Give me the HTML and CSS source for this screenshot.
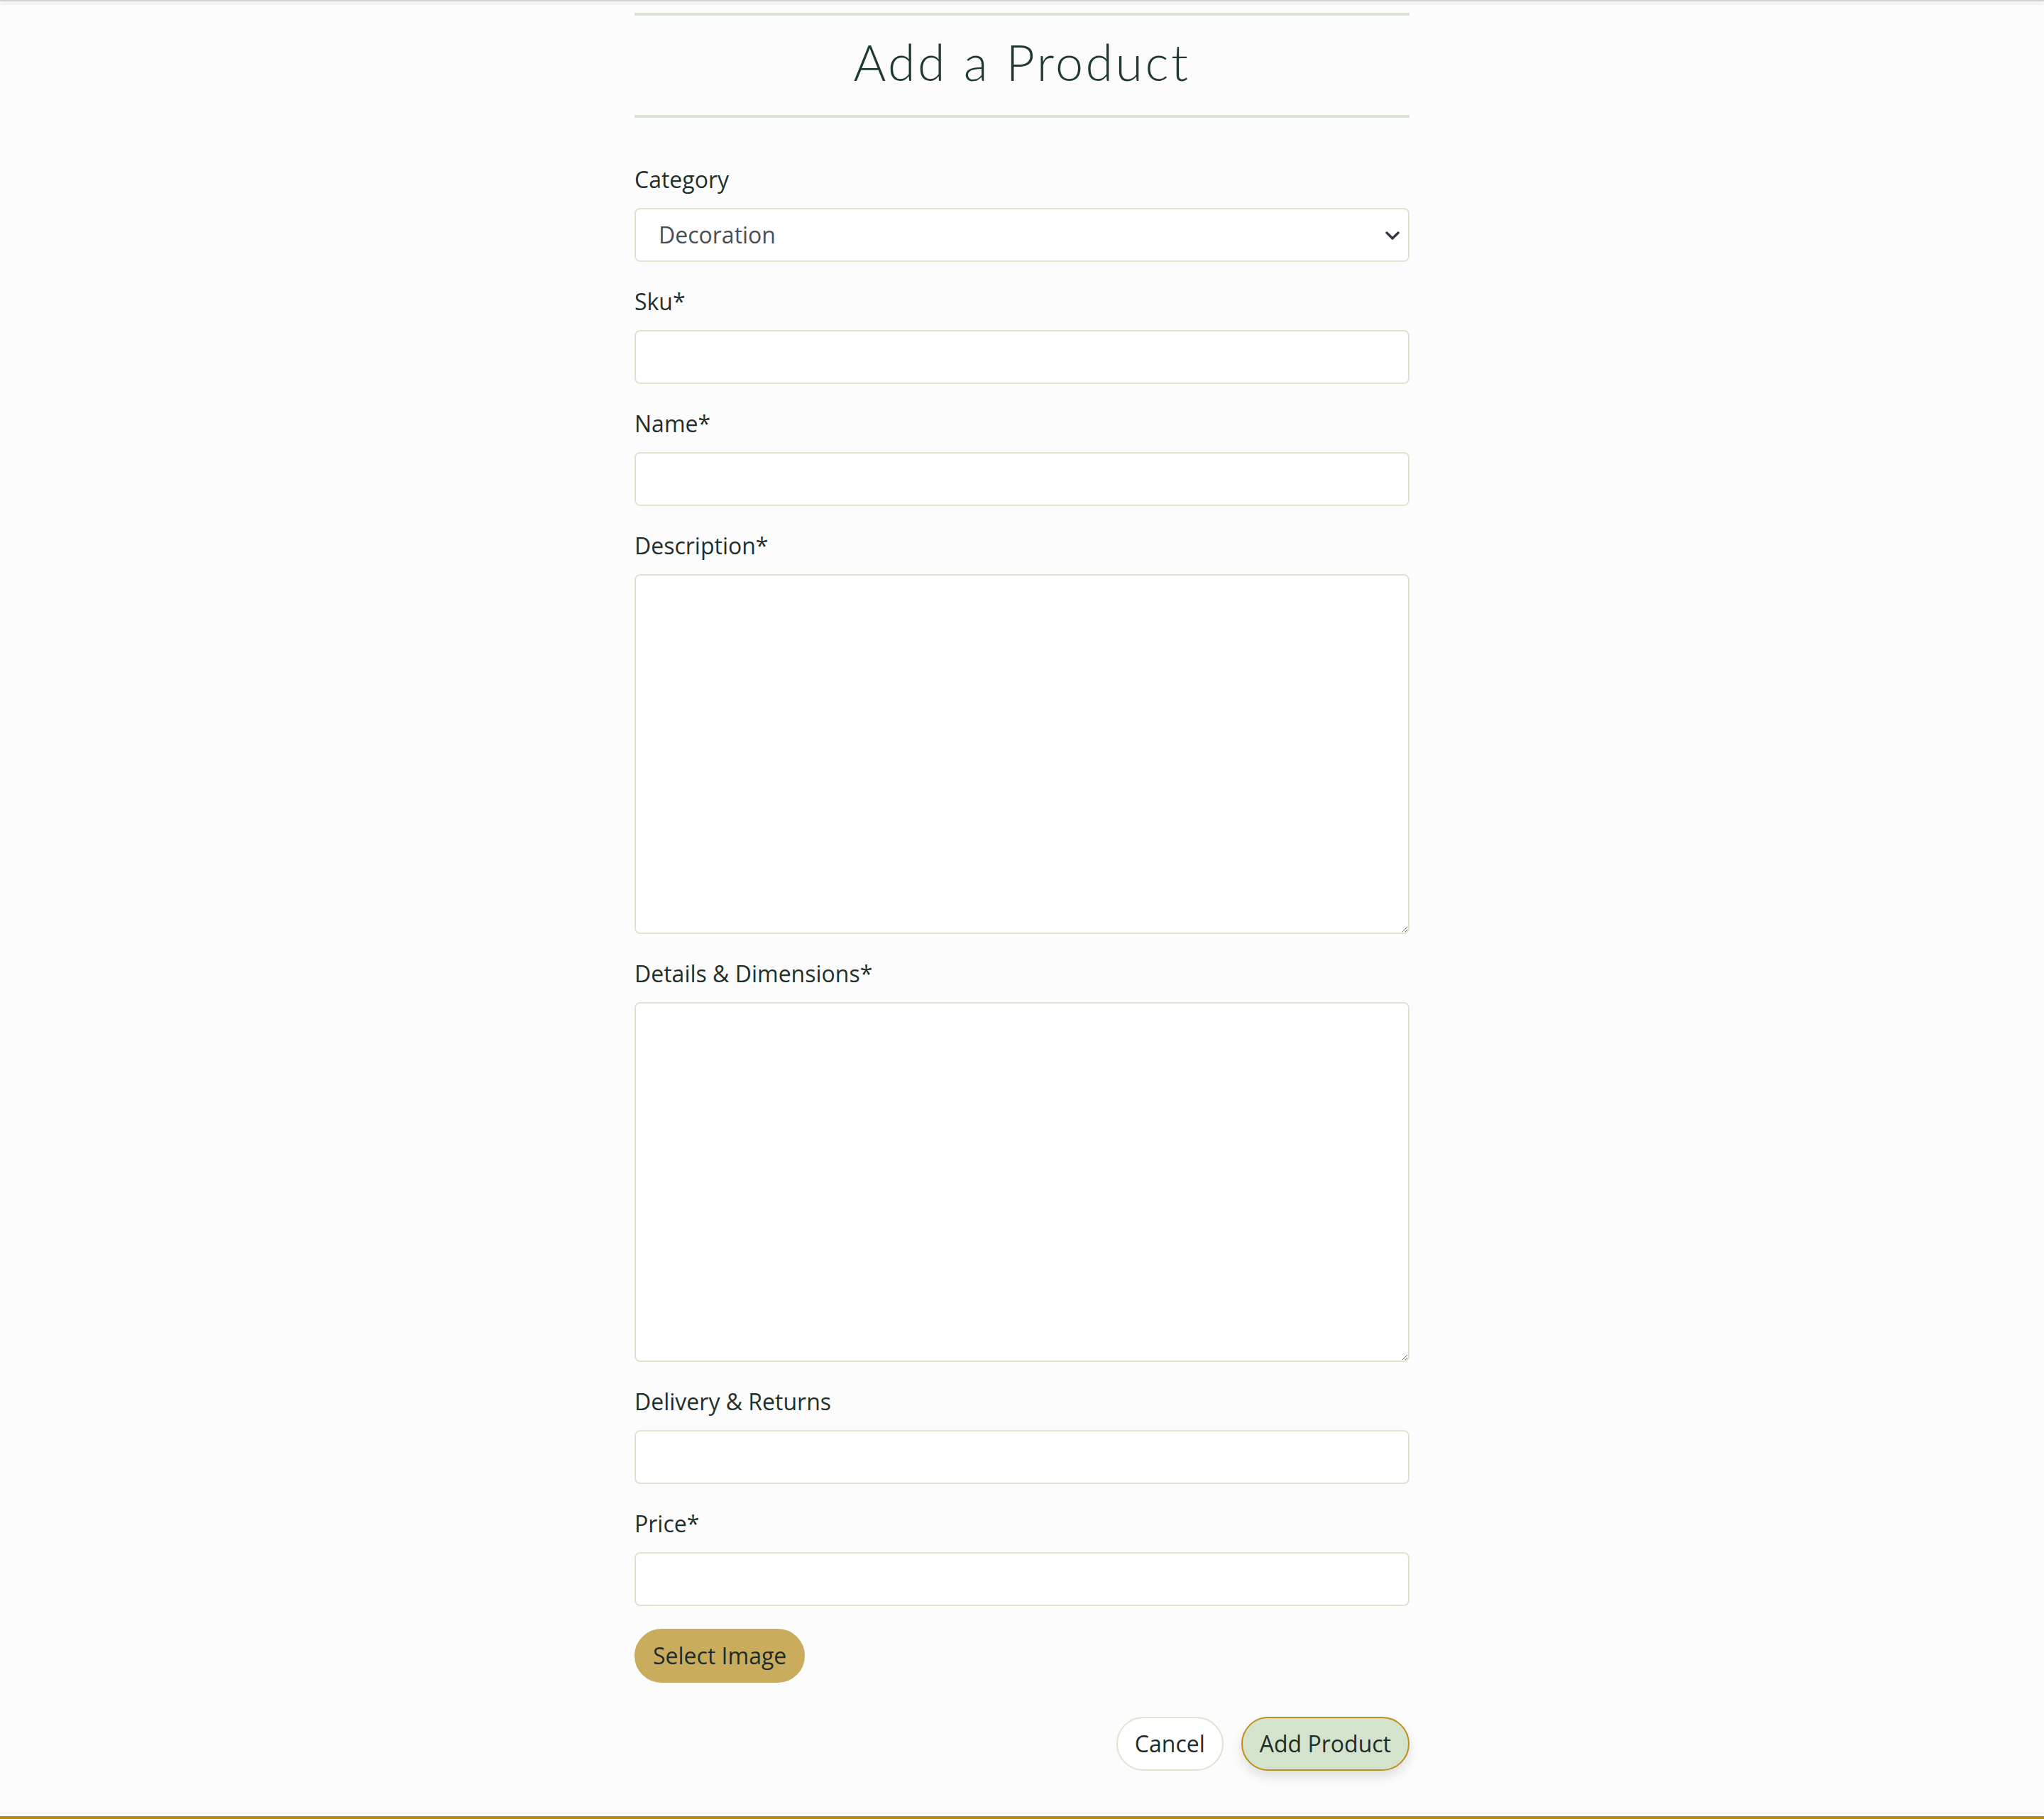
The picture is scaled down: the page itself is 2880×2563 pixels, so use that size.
FILE: index.html
```html
<!DOCTYPE html>
<html lang="en">
<head>
<meta charset="utf-8">
<title>Add a Product</title>
<link rel="stylesheet" href="styles.css">
</head>
<body>
<div class="topbar"></div>
<main class="page">
  <div class="container">
    <h1 class="title">Add a Product</h1>
    <form class="product-form">
      <div class="form-group">
        <label class="label" for="category">Category</label>
        <div class="select-wrap">
          <select id="category" class="control select">
            <option>Decoration</option>
          </select>
          <svg class="chevron" width="20" height="12" viewBox="0 0 20 12"><path d="M2 2 L10 10 L18 2" fill="none" stroke="#343a40" stroke-width="3.4" stroke-linecap="round" stroke-linejoin="round"/></svg>
        </div>
      </div>
      <div class="form-group">
        <label class="label" for="sku">Sku*</label>
        <input id="sku" class="control" type="text">
      </div>
      <div class="form-group">
        <label class="label" for="name">Name*</label>
        <input id="name" class="control" type="text">
      </div>
      <div class="form-group">
        <label class="label" for="description">Description*</label>
        <textarea id="description" class="control textarea" rows="10"></textarea>
      </div>
      <div class="form-group">
        <label class="label" for="details">Details &amp; Dimensions*</label>
        <textarea id="details" class="control textarea" rows="10"></textarea>
      </div>
      <div class="form-group">
        <label class="label" for="delivery">Delivery &amp; Returns</label>
        <input id="delivery" class="control" type="text">
      </div>
      <div class="form-group">
        <label class="label" for="price">Price*</label>
        <input id="price" class="control" type="text">
      </div>
      <button type="button" class="btn btn-gold">Select Image</button>
      <div class="actions">
        <button type="button" class="btn btn-cancel">Cancel</button>
        <button type="submit" class="btn btn-add">Add Product</button>
      </div>
    </form>
  </div>
</main>
<footer class="footer-line"></footer>
</body>
</html>
```
FILE: styles.css
```css
html, body {
  margin: 0;
  padding: 0;
}

body {
  min-height: 100vh;
  display: flex;
  flex-direction: column;
  background: #fcfcfc;
  font-family: "Open Sans", "Noto Sans", sans-serif;
  color: #1f302b;
}

.topbar {
  height: 2px;
  background: #d2d2d2;
  box-shadow: 0 2px 6px rgba(0, 0, 0, 0.18);
}

.page {
  flex: 1;
}

.container {
  width: 1092px;
  margin: 0 auto;
  padding-top: 16px;
}

.title {
  margin: 0;
  border-top: 4px solid #d9e5d1;
  border-bottom: 4px solid #d9e5d1;
  font-family: "Lato", "Noto Sans", sans-serif;
  font-weight: 300;
  font-size: 70px;
  line-height: 130px;
  padding-bottom: 10px;
  letter-spacing: 3.5px;
  text-align: center;
  color: #1d3930;
}

.product-form {
  margin-top: 63px;
  display: flex;
  flex-direction: column;
  align-items: flex-start;
}

.form-group {
  width: 100%;
  margin-bottom: 32px;
}

.label {
  display: block;
  font-size: 32px;
  line-height: 48px;
  margin-bottom: 16px;
  color: #1f302b;
}

.control {
  display: block;
  box-sizing: border-box;
  width: 100%;
  height: 76px;
  margin: 0;
  padding: 12px 32px;
  border: 2px solid #dbe6d3;
  border-radius: 8px;
  background: #ffffff;
  font-family: "Open Sans", "Noto Sans", sans-serif;
  font-size: 32px;
  line-height: 48px;
  color: #495057;
  outline: none;
}

.select-wrap {
  position: relative;
}

.select {
  appearance: none;
  -webkit-appearance: none;
}

.chevron {
  position: absolute;
  right: 14px;
  top: 33px;
  pointer-events: none;
}

.textarea {
  height: 507px;
  resize: vertical;
}

.btn {
  box-sizing: border-box;
  height: 76px;
  padding: 12px 24px;
  border: 2px solid transparent;
  border-radius: 999px;
  font-family: "Open Sans", "Noto Sans", sans-serif;
  font-size: 32px;
  line-height: 48px;
  color: #1f2b2a;
  cursor: pointer;
}

.btn-gold {
  background: #c9ad5d;
  border-color: #c9ad5d;
}

.actions {
  align-self: stretch;
  display: flex;
  justify-content: flex-end;
  gap: 25px;
  margin-top: 48px;
}

.btn-cancel {
  background: #ffffff;
  border-color: #dbe6d3;
}

.btn-add {
  background: #d4e3cb;
  border-color: #c08e1c;
  box-shadow: 0 8px 16px rgba(0, 0, 0, 0.12);
}

.footer-line {
  height: 4px;
  background: #b8890c;
}
```
